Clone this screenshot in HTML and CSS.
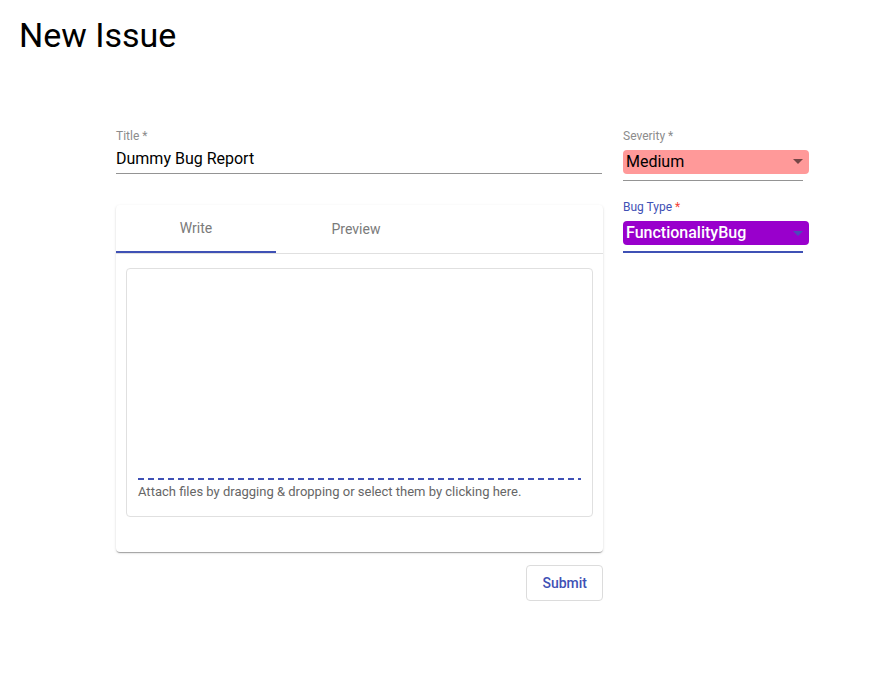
FILE: index.html
```html
<!DOCTYPE html>
<html lang="en">
<head>
<meta charset="utf-8">
<title>New Issue</title>
<link rel="stylesheet" href="styles.css">
</head>
<body>
<h1 class="page-title">New Issue</h1>
<div class="form">
  <div class="main-col">
    <div class="field">
      <div class="field-label">Title *</div>
      <div class="field-input">Dummy Bug Report</div>
    </div>
    <div class="card">
      <div class="tabs">
        <div class="tab tab-active">Write</div>
        <div class="tab">Preview</div>
      </div>
      <div class="editor">
        <div class="editor-box">
          <div class="editor-text"></div>
          <div class="dash"></div>
          <div class="tip">Attach files by dragging &amp; dropping or select them by clicking here.</div>
        </div>
      </div>
    </div>
    <div class="actions">
      <button class="submit" type="button">Submit</button>
    </div>
  </div>
  <div class="side-col">
    <div class="select-field">
      <div class="field-label">Severity *</div>
      <div class="select-wrap">
        <div class="select select-severity">
          <span>Medium</span>
          <svg class="arrow" width="10" height="5" viewBox="0 0 10 5"><path d="M0 0l5 5 5-5z" fill="rgba(0,0,0,0.54)"/></svg>
        </div>
      </div>
    </div>
    <div class="select-field select-field-focused">
      <div class="field-label label-focused">Bug Type <span class="req">*</span></div>
      <div class="select-wrap wrap-focused">
        <div class="select select-bug">
          <span>FunctionalityBug</span>
          <svg class="arrow" width="10" height="5" viewBox="0 0 10 5"><path d="M0 0l5 5 5-5z" fill="#4b4cb8"/></svg>
        </div>
      </div>
    </div>
  </div>
</div>
</body>
</html>
```

FILE: styles.css
```css
* { box-sizing: border-box; }

body {
  margin: 0;
  font-family: Roboto, "Liberation Sans", sans-serif;
  color: #000;
  background: #fff;
}

.page-title {
  margin: 0;
  padding: 14px 0 0 19px;
  font-size: 34px;
  line-height: 42px;
  font-weight: 400;
}

.form {
  display: flex;
  gap: 20px;
  padding-left: 116px;
  margin-top: 73px;
}

.main-col {
  width: 487px;
  display: flex;
  flex-direction: column;
}

.field {
  width: 486px;
}

.field-label {
  font-size: 12px;
  line-height: 14px;
  color: #8c8c8c;
}

.field-input {
  margin-top: 6px;
  font-size: 16px;
  line-height: 19px;
  padding-bottom: 5px;
  border-bottom: 1px solid #949494;
}

.card {
  margin-top: 31px;
  height: 347px;
  background: #fff;
  border-radius: 4px;
  box-shadow: 0 2px 1px -1px rgba(0,0,0,0.2), 0 1px 1px 0 rgba(0,0,0,0.14), 0 1px 3px 0 rgba(0,0,0,0.12);
}

.tabs {
  display: flex;
  height: 49px;
  border-bottom: 1px solid #e0e0e0;
}

.tab {
  width: 160px;
  height: 48px;
  display: flex;
  align-items: center;
  justify-content: center;
  font-size: 14px;
  color: #7a7a7a;
}

.tab-active {
  border-bottom: 2px solid #3f51b5;
}

.editor {
  padding: 14px 10px 0;
}

.editor-box {
  border: 1px solid #e0e0e0;
  border-radius: 4px;
  padding: 0 11px 16px;
}

.editor-text {
  height: 209px;
}

.dash {
  height: 2px;
  background: repeating-linear-gradient(to right, #3f51b5 0 6px, transparent 6px 10px);
}

.tip {
  margin-top: 4px;
  font-size: 13px;
  line-height: 16px;
  color: #666;
}

.actions {
  display: flex;
  justify-content: flex-end;
  margin-top: 13px;
}

.submit {
  font-family: Roboto, "Liberation Sans", sans-serif;
  font-size: 14px;
  font-weight: 500;
  line-height: 24px;
  padding: 5px 15px;
  height: 36px;
  color: #3f51b5;
  background: #fff;
  border: 1px solid #dcdcdc;
  border-radius: 4px;
}

.side-col {
  width: 180px;
  display: flex;
  flex-direction: column;
  gap: 19px;
}

.select-wrap {
  margin-top: 7px;
  padding-bottom: 6px;
  border-bottom: 1px solid #949494;
}

.wrap-focused {
  margin-top: 7px;
  border-bottom: 2px solid #3f51b5;
}

.label-focused { color: #3f51b5; }
.req { color: #f44336; }

.select {
  position: relative;
  width: 186px;
  height: 24px;
  border-radius: 4px;
  padding-left: 3px;
  font-size: 16px;
  line-height: 24px;
}

.select-severity {
  background: #ff9999;
  color: #000;
}

.select-bug {
  background: #9900cc;
  color: #fff;
  font-weight: 500;
}

.arrow {
  position: absolute;
  left: 170px;
  top: 9px;
}
.select-bug .arrow { top: 10px; }
```
